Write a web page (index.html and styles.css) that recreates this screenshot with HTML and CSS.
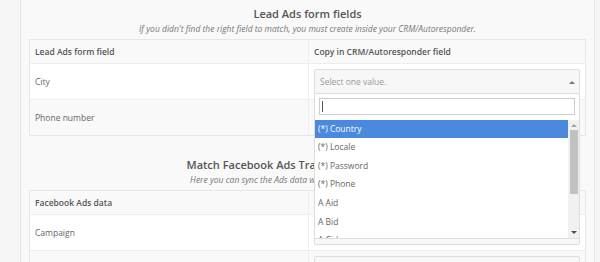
FILE: index.html
```html
<!DOCTYPE html>
<html lang="en">
<head>
    <meta charset="UTF-8">
    <title>Lead Ads mapping</title>
    <link rel="stylesheet" href="styles.css">
</head>
<body>
    <div class="panel">
        <div class="section">
            <h2>Lead Ads form fields</h2>
            <p class="hint">If you didn't find the right field to match, you must create inside your CRM/Autoresponder.</p>
            <div class="map-table">
                <div class="row head">
                    <div class="cell">Lead Ads form field</div>
                    <div class="cell">Copy in CRM/Autoresponder field</div>
                </div>
                <div class="row">
                    <div class="cell">City</div>
                    <div class="cell">
                        <div class="select-wrap">
                            <div class="select open">
                                <span class="placeholder">Select one value.</span>
                                <span class="arrow"></span>
                            </div>
                            <div class="dropdown">
                                <div class="search"><span class="caret"></span></div>
                                <div class="results">
                                    <ul class="options">
                                        <li class="active">(*) Country</li>
                                        <li>(*) Locale</li>
                                        <li>(*) Password</li>
                                        <li>(*) Phone</li>
                                        <li>A Aid</li>
                                        <li>A Bid</li>
                                        <li>A Cid</li>
                                    </ul>
                                    <div class="scrollbar">
                                        <span class="sb-up"></span>
                                        <span class="sb-thumb"></span>
                                        <span class="sb-down"></span>
                                    </div>
                                </div>
                            </div>
                        </div>
                    </div>
                </div>
                <div class="row">
                    <div class="cell">Phone number</div>
                    <div class="cell">
                        <div class="select"><span class="placeholder">Select one value.</span><span class="arrow down"></span></div>
                    </div>
                </div>
            </div>
        </div>

        <div class="section">
            <h2>Match Facebook Ads Tracking with CRM fields</h2>
            <p class="hint">Here you can sync the Ads data with CRM/Autoresponder fields</p>
            <div class="map-table">
                <div class="row head">
                    <div class="cell">Facebook Ads data</div>
                    <div class="cell">Copy in CRM/Autoresponder field</div>
                </div>
                <div class="row">
                    <div class="cell">Campaign</div>
                    <div class="cell">
                        <div class="select"><span class="placeholder">Select one value.</span><span class="arrow down"></span></div>
                    </div>
                </div>
                <div class="row">
                    <div class="cell">Ad set</div>
                    <div class="cell">
                        <div class="select"><span class="placeholder">Select one value.</span><span class="arrow down"></span></div>
                    </div>
                </div>
            </div>
        </div>
    </div>
</body>
</html>
```

FILE: styles.css
```css
body {
    margin: 0;
    background-color: #f5f5f5;
    font-family: "Open Sans", Arial, sans-serif;
    color: #666;
}
.panel {
    margin-left: 20px;
    width: 557px;
    min-height: 400px;
    padding: 6px 8px 0;
    background-color: #f9f9f9;
    border-left: 1px solid #e6e6e6;
    border-right: 1px solid #e6e6e6;
}
.section + .section {
    margin-top: 21px;
}
h2 {
    margin: 0;
    font-size: 11px;
    line-height: 16px;
    font-weight: 600;
    color: #555;
    text-align: center;
    white-space: nowrap;
}
.hint {
    margin: 1px 0 4px;
    font-size: 8.5px;
    line-height: 12px;
    font-style: italic;
    color: #777;
    text-align: center;
    white-space: nowrap;
}
.map-table {
    border: 1px solid #e6e6e6;
    background-color: #fff;
    font-size: 8.5px;
}
.row {
    display: grid;
    grid-template-columns: 278px 1fr;
    border-top: 1px solid #eee;
}
.row:nth-child(odd) {
    background-color: #f9f9f9;
}
.row.head {
    border-top: none;
    font-weight: 600;
    color: #555;
}
.cell {
    display: flex;
    align-items: center;
    padding: 5px;
    min-height: 25px;
}
.cell + .cell {
    border-left: 1px solid #eee;
}
.row.head .cell {
    min-height: 13px;
}

/* select2-like box */
.select-wrap {
    position: relative;
    width: 100%;
}
.select {
    position: relative;
    display: flex;
    align-items: center;
    width: 100%;
    height: 25px;
    box-sizing: border-box;
    padding: 0 5px;
    background-color: #f7f7f7;
    border: 1px solid #ddd;
    border-radius: 2px;
}
.select.open {
    border-radius: 2px 2px 0 0;
}
.placeholder {
    color: #999;
}
.arrow {
    position: absolute;
    right: 4px;
    top: 11px;
    border-left: 3px solid transparent;
    border-right: 3px solid transparent;
    border-bottom: 3px solid #777;
}
.arrow.down {
    border-bottom: none;
    border-top: 3px solid #777;
}
.dropdown {
    position: absolute;
    left: 0;
    top: 25px;
    z-index: 10;
    width: 100%;
    box-sizing: border-box;
    background-color: #fff;
    border: 1px solid #ddd;
    border-top: none;
}
.search {
    margin: 4px 4px 5px;
    height: 17px;
    box-sizing: border-box;
    border: 1px solid #ccc;
    display: flex;
    align-items: center;
    padding-left: 2px;
}
.caret {
    width: 1px;
    height: 11px;
    background-color: #555;
}
.results {
    display: flex;
    height: 118px;
    overflow: hidden;
}
.options {
    flex: 1;
    margin: 0;
    padding: 0;
    list-style: none;
    color: #666;
}
.options li {
    height: 18.67px;
    line-height: 18.67px;
    padding: 0 3px;
}
.options li.active {
    height: 18px;
    line-height: 18px;
    background-color: #4a89dc;
    color: #fff;
}
.scrollbar {
    position: relative;
    width: 11px;
    background-color: #f1f1f1;
}
.sb-thumb {
    position: absolute;
    left: 2px;
    right: 1px;
    top: 10px;
    height: 64px;
    background-color: #c1c1c1;
}
.sb-up, .sb-down {
    position: absolute;
    left: 3px;
    border-left: 3px solid transparent;
    border-right: 3px solid transparent;
}
.sb-up {
    top: 4px;
    border-bottom: 3px solid #a3a3a3;
}
.sb-down {
    bottom: 4px;
    border-top: 3px solid #505050;
}
```
